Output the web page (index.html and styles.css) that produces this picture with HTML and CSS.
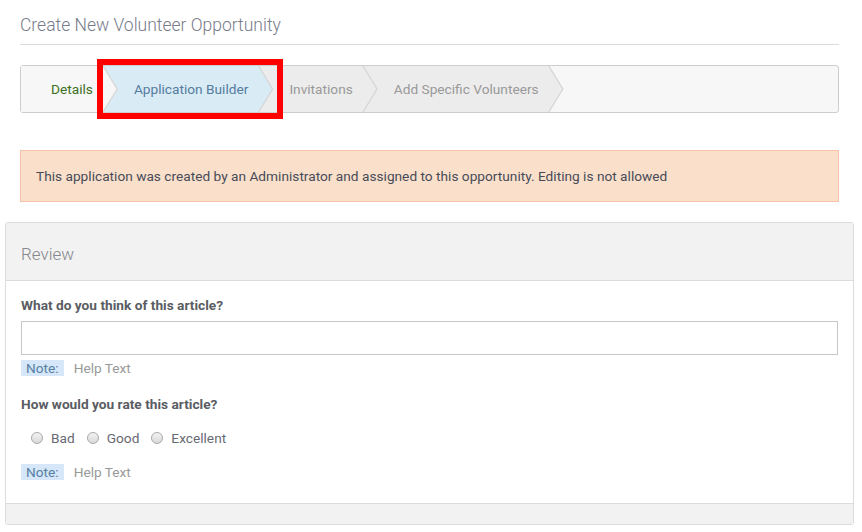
FILE: index.html
```html
<!DOCTYPE html>
<html lang="en">

<head>
  <meta charset="UTF-8">
  <meta name="viewport" content="width=device-width, initial-scale=1.0">
  <title>Create New Volunteer Opportunity</title>
  <link rel="stylesheet" href="styles.css">
</head>

<body>
  <h1 class="page-title">Create New Volunteer Opportunity</h1>

  <!-- Wizard steps -->
  <div class="wizard">
    <div class="step done">Details</div>
    <div class="step active">Application Builder</div>
    <div class="step">Invitations</div>
    <div class="step">Add Specific Volunteers</div>
    <div class="highlight"></div>
  </div>

  <div class="alert">
    This application was created by an Administrator and assigned to this opportunity. Editing is not allowed
  </div>

  <!-- Review panel -->
  <div class="panel">
    <div class="panel-heading">Review</div>
    <div class="panel-body">
      <label class="field-label" for="article-thoughts">What do you think of this article?</label>
      <input type="text" id="article-thoughts" class="text-input">
      <div class="help"><span class="note">Note:</span> Help Text</div>

      <div class="field-label rate-label">How would you rate this article?</div>
      <div class="radios">
        <label><input type="radio" name="rating"> Bad</label>
        <label><input type="radio" name="rating"> Good</label>
        <label><input type="radio" name="rating"> Excellent</label>
      </div>
      <div class="help"><span class="note">Note:</span> Help Text</div>
    </div>
    <div class="panel-footer"></div>
  </div>
</body>

</html>
```
FILE: styles.css
```css
body {
  font-family: 'Roboto', sans-serif;
  font-size: 13.7px;
  line-height: 20px;
  margin: 0;
  background-color: #fff;
  color: #555;
}

.page-title {
  margin: 0 23px 0 20px;
  padding: 13px 0 7px;
  font-size: 17.5px;
  line-height: 24px;
  font-weight: 300;
  color: #777b8a;
  border-bottom: 1px solid #dcdcdc;
}

/* Wizard steps */
.wizard {
  position: relative;
  display: flex;
  height: 46px;
  margin: 20px 23px 0 20px;
  border: 1px solid #cdcdcd;
  border-radius: 3px;
  background-color: #f7f7f7;
}

.step {
  position: relative;
  display: flex;
  align-items: center;
  padding: 0 25px 0 30px;
  margin-left: -14px;
  white-space: nowrap;
  color: #999;
  background-color: #d6d6d6;
  clip-path: polygon(0 0, calc(100% - 14px) 0, 100% 50%, calc(100% - 14px) 100%, 0 100%, 14px 50%);
}

.step::before {
  content: "";
  position: absolute;
  inset: 0;
  z-index: -1;
  background-color: #ececec;
  clip-path: polygon(0 0, calc(100% - 15.5px) 0, calc(100% - 1.5px) 50%, calc(100% - 15.5px) 100%, 0 100%, 14px 50%);
}

.step.done {
  margin-left: 0;
  color: #3b7022;
  clip-path: polygon(0 0, calc(100% - 14px) 0, 100% 50%, calc(100% - 14px) 100%, 0 100%);
}

.step.done::before {
  background-color: #f7f7f7;
  clip-path: polygon(0 0, calc(100% - 15.5px) 0, calc(100% - 1.5px) 50%, calc(100% - 15.5px) 100%, 0 100%);
}

.step.active {
  color: #557c9e;
}

.step.active::before {
  background-color: #d9ebf5;
}

.highlight {
  position: absolute;
  left: 76px;
  top: -7px;
  width: 186px;
  height: 60px;
  box-sizing: border-box;
  border: 6px solid #f00;
}

.alert {
  margin: 37px 23px 0 20px;
  padding: 15px;
  border: 1px solid #f6c3aa;
  background-color: #fae0ca;
  color: #474b59;
}

/* Panel */
.panel {
  margin: 20px 8px 0 5px;
  border: 1px solid #dcdcdc;
  border-radius: 3px;
  box-shadow: 0 1px 1px rgba(0, 0, 0, 0.05);
  overflow: hidden;
}

.panel-heading {
  padding: 19px 15px 14px;
  font-size: 17px;
  line-height: 24px;
  font-weight: 300;
  color: #85878c;
  background-color: #f2f2f2;
  border-bottom: 1px solid #dcdcdc;
}

.panel-body {
  padding: 14px 15px 23px;
}

.field-label {
  display: block;
  font-weight: 700;
  color: #5a5c63;
}

.text-input {
  display: block;
  box-sizing: border-box;
  width: 100%;
  height: 34px;
  margin: 6px 0 0;
  border: 1px solid #c8c8c8;
  font: inherit;
}

.help {
  display: flex;
  align-items: center;
  gap: 10px;
  margin-top: 5px;
  line-height: 16px;
  color: #999;
}

.note {
  padding: 0 5px;
  background-color: #d5e7f8;
  color: #5580a2;
}

.rate-label {
  margin-top: 18px;
}

.radios {
  display: flex;
  gap: 12px;
  margin: 14px 0 16px 10px;
  color: #676a73;
}

.radios label {
  display: flex;
  align-items: center;
  gap: 8px;
}

.radios input {
  appearance: none;
  width: 12px;
  height: 12px;
  margin: 0;
  border: 1px solid #a9a9a9;
  border-radius: 50%;
  background: linear-gradient(#f2f2f2, #d9d9d9);
}

.panel-footer {
  height: 20px;
  background-color: #f2f2f2;
  border-top: 1px solid #dcdcdc;
}
```
